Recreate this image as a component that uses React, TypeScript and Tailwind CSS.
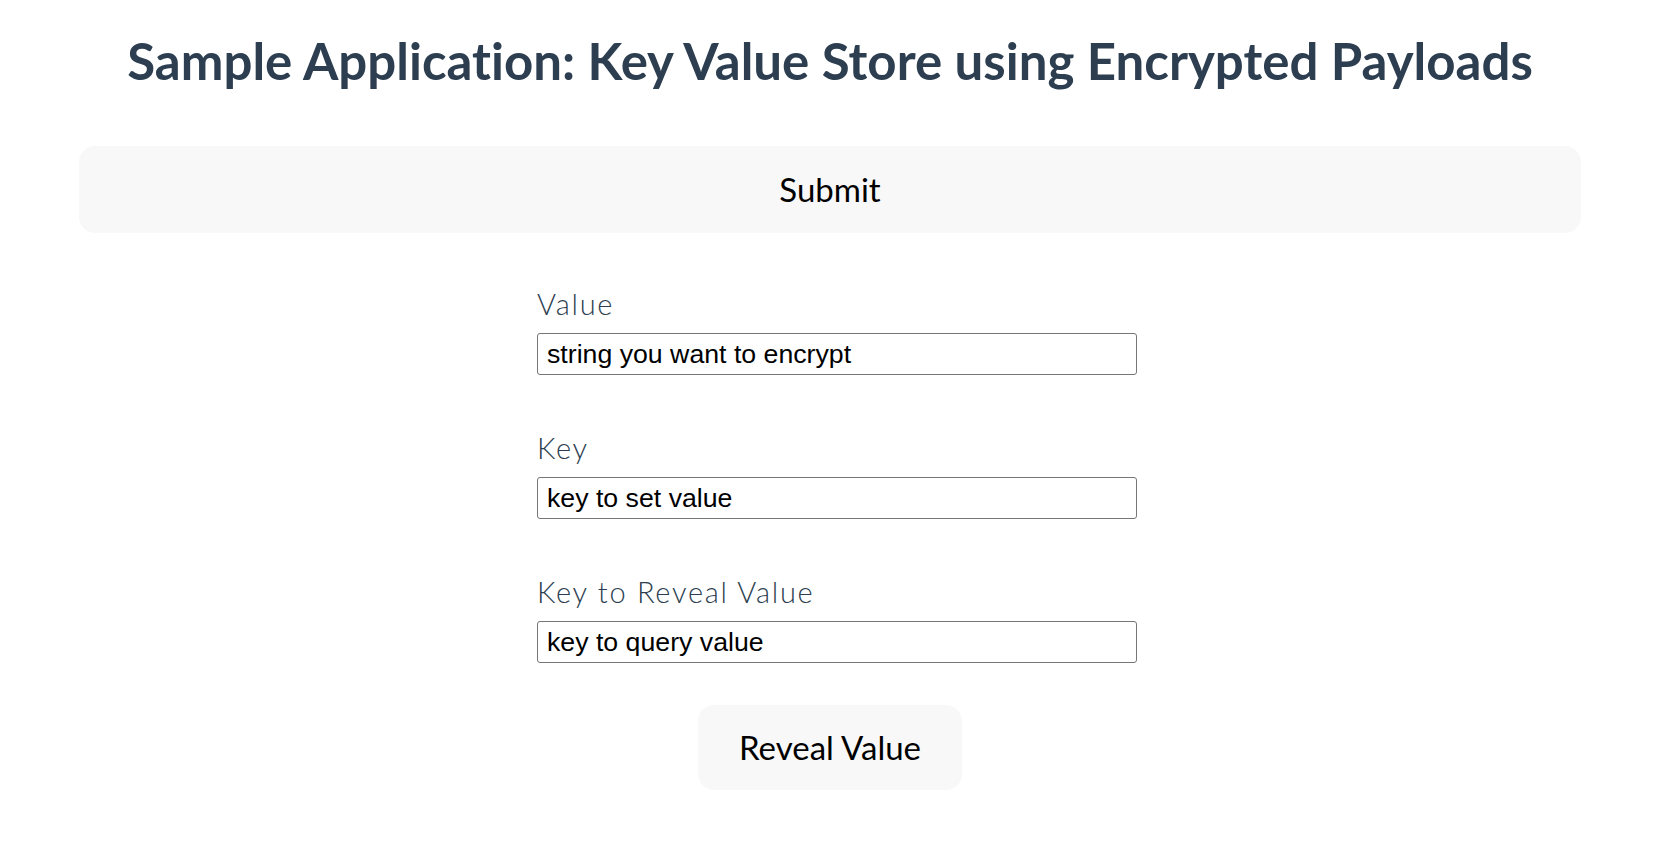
import { useState } from "react";

const fields = [
  { label: "Value", initial: "string you want to encrypt" },
  { label: "Key", initial: "key to set value" },
  { label: "Key to Reveal Value", initial: "key to query value" },
];

function Field({ label, initial }: { label: string; initial: string }) {
  const [val, setVal] = useState(initial);
  return (
    <div className="flex flex-col items-start">
      <label className="block h-[30px] text-[29px] leading-[30px] font-light tracking-[0.06em] text-[#2c3e50]">
        {label}
      </label>
      <input
        value={val}
        onChange={(e) => setVal(e.target.value)}
        className="mt-[14px] h-[42px] w-[600px] rounded-[3px] border border-[#767676] px-[9px] text-[26.7px] text-black outline-none"
        style={{ fontFamily: '"Liberation Sans", Arial, sans-serif' }}
      />
    </div>
  );
}

export default function App() {
  return (
    <div
      className="min-h-screen bg-white text-center text-[#2c3e50] [font-variant-ligatures:none]"
      style={{ fontFamily: 'Lato, "Noto Sans", sans-serif' }}
    >
      <h1 className="pt-[35px] text-[51px] leading-none font-bold">
        Sample Application: Key Value Store using Encrypted Payloads
      </h1>

      <div className="mx-[79px] mt-[60px]">
        <button className="flex h-[87px] w-full items-center justify-center rounded-2xl bg-[#f8f8f8] text-[33px] text-black">
          Submit
        </button>
      </div>

      <div className="mt-[56px] flex justify-center">
        <div className="ml-[14px] flex flex-col gap-[58px]">
          {fields.map((f) => (
            <Field key={f.label} label={f.label} initial={f.initial} />
          ))}
        </div>
      </div>

      <div className="mt-[42px] flex justify-center">
        <button className="h-[85px] w-[264px] rounded-2xl bg-[#f8f8f8] text-[33px] text-black">
          Reveal Value
        </button>
      </div>
    </div>
  );
}
